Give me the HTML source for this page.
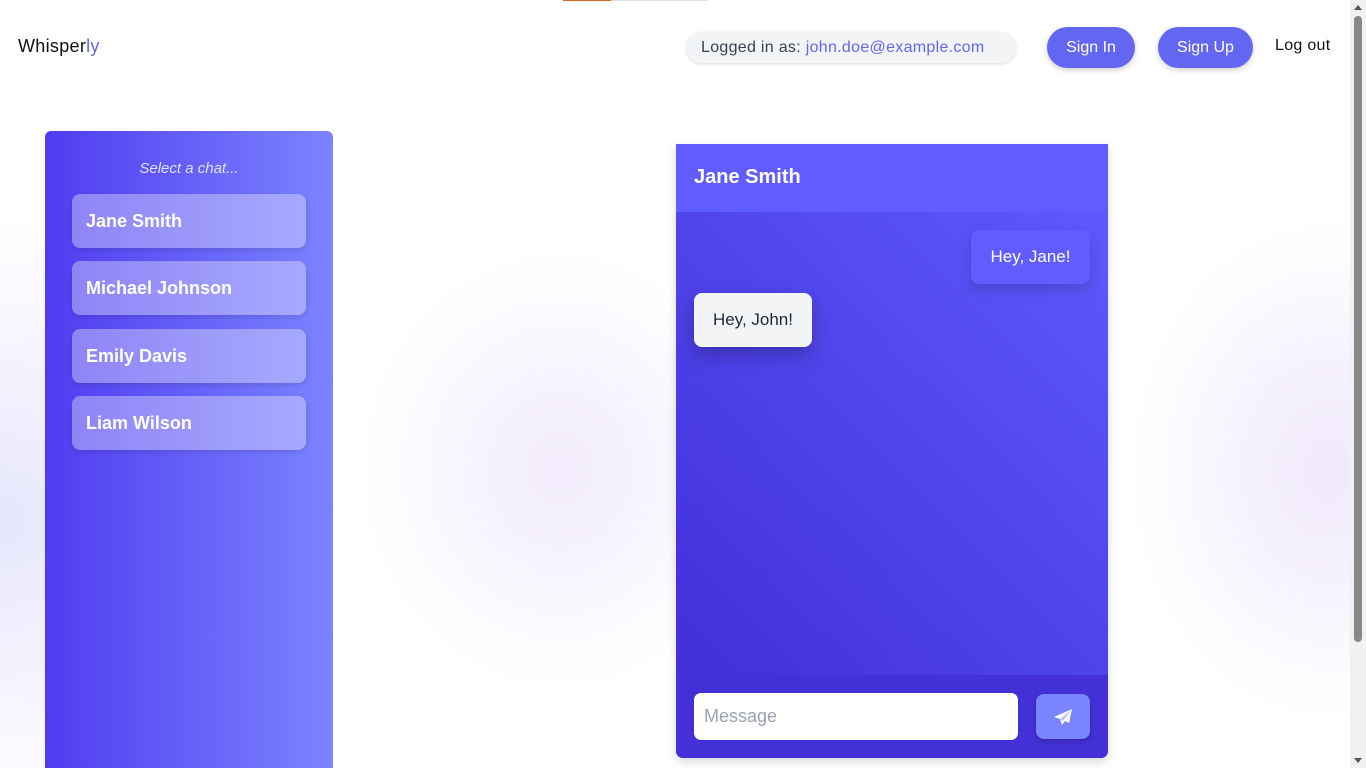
<!DOCTYPE html>
<html><head><meta charset="utf-8"><style>
*{box-sizing:border-box;margin:0;padding:0}
html,body{width:1366px;height:768px;overflow:hidden}
body{font-family:"Liberation Sans",sans-serif;background:#fff;position:relative}
.bg{position:absolute;inset:0;width:1350px;background:
radial-gradient(ellipse 200px 220px at 560px 470px,rgba(210,190,245,.3),transparent),
radial-gradient(ellipse 200px 250px at 1330px 470px,rgba(210,190,245,.35),transparent),
radial-gradient(ellipse 300px 300px at 0px 520px,rgba(200,200,250,.45),transparent);}
.tab1{position:absolute;left:563px;top:0;width:48px;height:1px;background:#d2691e}
.tab2{position:absolute;left:611px;top:0;width:96px;height:1px;background:#ddd}
.sb{position:absolute;right:0;top:0;width:16px;height:768px;background:#f1f1f1}
.sb .th{position:absolute;left:4px;top:16px;width:8px;height:626px;background:#888;border-radius:4px}
.sb .a1,.sb .a2{position:absolute;left:4px;width:0;height:0;border-left:4px solid transparent;border-right:4px solid transparent}
.sb .a1{top:5px;border-bottom:5px solid #555}.sb .a2{bottom:5px;border-top:5px solid #555}
.logo{position:absolute;left:18px;top:36px;font-size:18px;color:#111;letter-spacing:.3px}
.logo span{color:#6366f1}
.pill{position:absolute;left:686px;top:32px;width:330px;height:31px;border-radius:16px;background:#f3f4f6;box-shadow:0 1px 3px rgba(0,0,0,.15);font-size:16px;color:#374151;line-height:31px;padding-left:15px;white-space:nowrap;letter-spacing:.3px}
.pill b{font-weight:normal;color:#6366f1}
.btn{position:absolute;top:27px;height:41px;border-radius:21px;background:#6366f1;color:#fff;font-size:16px;line-height:41px;text-align:center;box-shadow:0 2px 6px rgba(0,0,0,.2)}
.logout{position:absolute;left:1275px;top:37px;font-size:16px;color:#111;letter-spacing:.3px}
.side{position:absolute;left:45px;top:131px;width:288px;height:660px;border-radius:6px;background:linear-gradient(90deg,#4f3cf0,#7b84ff)}
.side .h{position:absolute;top:29px;width:100%;text-align:center;color:#e0e0ff;font-style:italic;font-size:15px}
.item{position:absolute;left:27px;width:234px;height:54px;border-radius:8px;background:rgba(255,255,255,.35);color:#fff;font-size:18px;font-weight:bold;line-height:54px;padding-left:14px;box-shadow:0 2px 5px rgba(0,0,0,.12)}
.chat{position:absolute;left:676px;top:144px;width:432px;height:614px;border-radius:0 0 7px 7px;overflow:hidden;box-shadow:0 4px 10px rgba(0,0,0,.15);background:linear-gradient(45deg,#3f2ad6,#5f5dff)}
.ch{height:68px;background:#615cff;color:#fff;font-weight:bold;font-size:20px;line-height:66px;padding-left:18px}
.m1{position:absolute;right:18px;top:86px;height:54px;width:119px;border-radius:8px;background:#615cff;color:#fff;font-size:17px;line-height:54px;text-align:center;box-shadow:0 6px 14px rgba(0,0,0,.15)}
.m2{position:absolute;left:18px;top:149px;height:54px;width:118px;border-radius:8px;background:#f3f4f6;color:#1f2937;font-size:17px;line-height:54px;text-align:center;box-shadow:0 8px 20px rgba(0,0,0,.25)}
.foot{position:absolute;left:0;bottom:0;width:100%;height:83px;background:#4330d6}
.inp{position:absolute;left:18px;top:18px;width:324px;height:47px;background:#fff;border-radius:7px;color:#9ca3af;font-size:18px;line-height:47px;padding-left:10px}
.send{position:absolute;left:360px;top:19px;width:54px;height:45px;border-radius:8px;background:#7b84ff;box-shadow:0 2px 5px rgba(0,0,0,.2)}
</style></head><body>
<div class="bg"></div>
<div class="tab1"></div><div class="tab2"></div>
<div class="logo">Whisper<span>ly</span></div>
<div class="pill">Logged in as: <b>john.doe@example.com</b></div>
<div class="btn" style="left:1047px;width:88px">Sign In</div>
<div class="btn" style="left:1158px;width:95px">Sign Up</div>
<div class="logout">Log out</div>
<div class="side"><div class="h">Select a chat...</div>
<div class="item" style="top:63px">Jane Smith</div>
<div class="item" style="top:130px">Michael Johnson</div>
<div class="item" style="top:198px">Emily Davis</div>
<div class="item" style="top:265px">Liam Wilson</div>
</div>
<div class="chat"><div class="ch">Jane Smith</div>
<div class="m1">Hey, Jane!</div>
<div class="m2">Hey, John!</div>
<div class="foot"><div class="inp">Message</div>
<div class="send"><svg width="54" height="45" viewBox="0 0 54 45"><path d="M36 15 L18 23 L24 25 L26 31 L29 27 L33 29 Z" fill="#fff"/><path d="M24 25 L36 15 L27 27 Z" fill="#7b84ff" opacity=".5"/></svg></div>
</div></div>
<div class="sb"><div class="a1"></div><div class="th"></div><div class="a2"></div></div>
</body></html>
